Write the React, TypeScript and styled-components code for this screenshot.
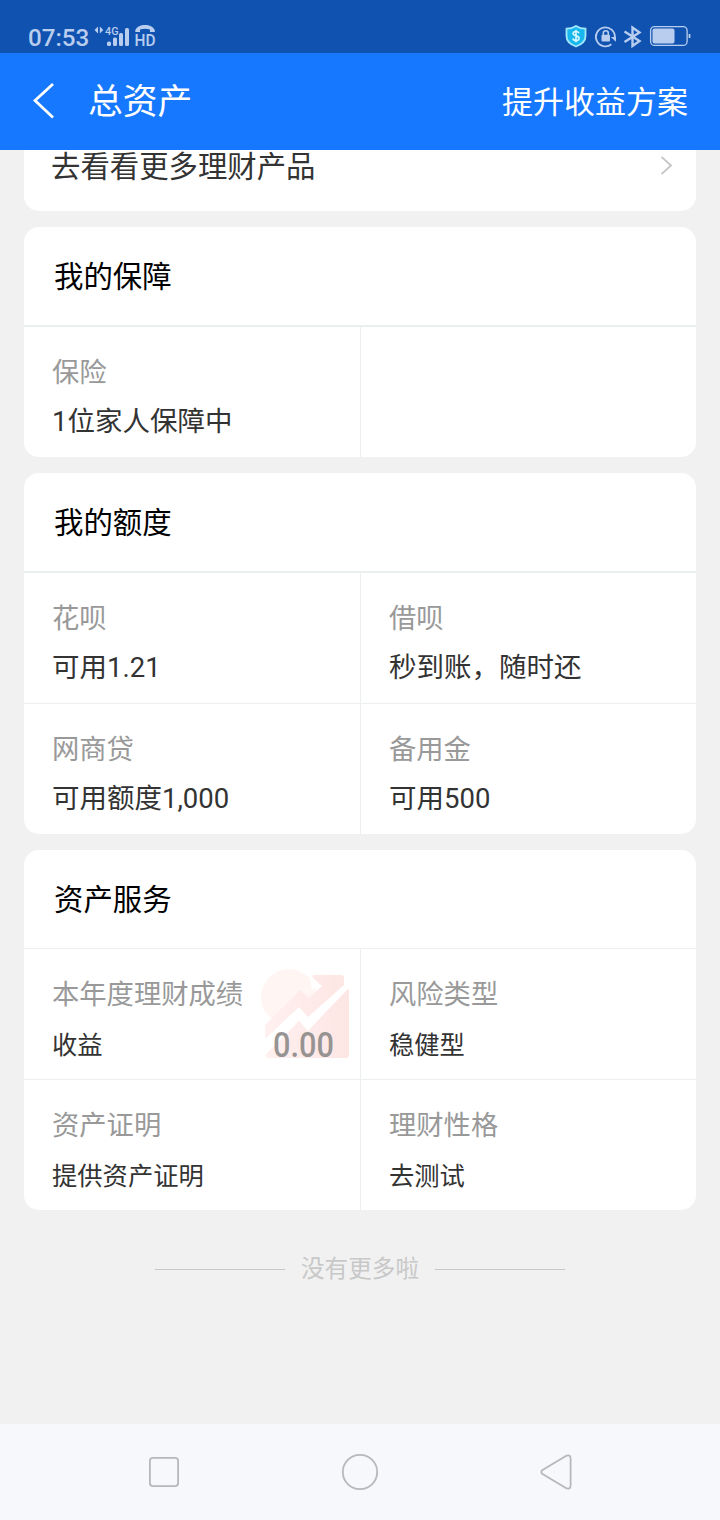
import React from "react";
import styled, { createGlobalStyle } from "styled-components";

const GlobalStyle = createGlobalStyle`
  *, *::before, *::after { box-sizing: border-box; }
  body {
    margin: 0;
    background: #f1f1f1;
    font-family: Roboto, "Noto Sans CJK SC", sans-serif;
  }
`;

const Screen = styled.div`
  display: flex;
  flex-direction: column;
  width: 720px;
  height: 1520px;
  overflow: hidden;
  background: #f1f1f1;
`;

const StatusBar = styled.div`
  display: flex;
  flex: none;
  justify-content: space-between;
  height: 53px;
  padding: 22px 29px 0 28px;
  background: #1052b0;
  color: #b9cdee;
`;

const StatusGroup = styled.div`
  display: flex;
  align-items: flex-start;
`;

const Clock = styled.span`
  width: 66px;
  font-size: 24.2px;
  font-weight: 500;
  line-height: 32px;
`;

const NavBar = styled.header`
  display: flex;
  flex: none;
  align-items: center;
  height: 97px;
  padding: 0 32px 2px 33px;
  background: #1677ff;
  color: #fff;
`;

const PageTitle = styled.h1`
  flex: 1;
  margin: 0 0 0 33px;
  padding-top: 3px;
  font-size: 34.8px;
  font-weight: 400;
  line-height: 48px;
`;

const PlanLink = styled.span`
  padding-top: 5px;
  font-size: 31px;
  line-height: 44px;
`;

const Content = styled.main`
  display: flex;
  flex: 1;
  flex-direction: column;
  gap: 16px;
  min-height: 0;
  padding: 0 24px;
`;

const Card = styled.section`
  flex: none;
  overflow: hidden;
  border-radius: 15px;
  background: #fff;
`;

const MoreCard = styled(Card)`
  display: flex;
  align-items: flex-start;
  justify-content: space-between;
  height: 61px;
  padding: 1px 23px 0 27px;
  border-top-left-radius: 0;
  border-top-right-radius: 0;
  color: #333;
  font-size: 29.4px;
  line-height: 32px;
  svg { margin-top: 4px; }
`;

const CardTitle = styled.h2`
  height: 98px;
  margin: 0;
  padding-left: 30px;
  color: #000;
  font-size: 29.4px;
  font-weight: 400;
  line-height: 100px;
`;

const Grid = styled.div<{ $rule: number }>`
  display: grid;
  grid-template-columns: 336px 335px;
  grid-auto-rows: 130px;
  gap: 1px;
  border-top: ${(p) => p.$rule}px solid #ebefef;
  background: #ebefef;
`;

const Cell = styled.div`
  position: relative;
  padding: 27px 0 0 28px;
  background: #fff;
`;

const Label = styled.div`
  position: relative;
  color: #999;
  font-size: 27.3px;
  line-height: 38px;
`;

const Value = styled.div<{ $compact?: boolean }>`
  margin-top: ${(p) => (p.$compact ? 13 : 11)}px;
  color: #333;
  font-size: ${(p) => (p.$compact ? 25.3 : 27.5)}px;
  line-height: 38px;
`;

const ChartMark = styled.svg`
  position: absolute;
  top: 18px;
  left: 237px;
`;

const Amount = styled.span`
  position: absolute;
  top: 76px;
  left: 249px;
  color: #979393;
  font-size: 34.5px;
  font-weight: 500;
  line-height: 40px;
  transform: scaleX(0.89);
  transform-origin: left;
`;

const EndNote = styled.div`
  display: flex;
  align-items: center;
  justify-content: center;
  gap: 16px;
  margin-top: 26px;
  color: #c8c8c8;
  font-size: 23.6px;
  line-height: 34px;
  &::before, &::after {
    content: "";
    width: 130px;
    height: 1px;
    margin-top: 1px;
    background: #c8c8c8;
  }
`;

const SystemNav = styled.nav`
  display: flex;
  flex: none;
  align-items: center;
  justify-content: space-between;
  height: 96px;
  padding: 0 144px;
  background: #f6f8fc;
`;

type Item = { label: string; value: string; amount?: string };
type Group = { title: string; rule: number; compact?: boolean; items: (Item | null)[] };

const groups: Group[] = [
  { title: "我的保障", rule: 2, items: [{ label: "保险", value: "1位家人保障中" }, null] },
  {
    title: "我的额度",
    rule: 2,
    items: [
      { label: "花呗", value: "可用1.21" },
      { label: "借呗", value: "秒到账，随时还" },
      { label: "网商贷", value: "可用额度1,000" },
      { label: "备用金", value: "可用500" },
    ],
  },
  {
    title: "资产服务",
    rule: 1,
    compact: true,
    items: [
      { label: "本年度理财成绩", value: "收益", amount: "0.00" },
      { label: "风险类型", value: "稳健型" },
      { label: "资产证明", value: "提供资产证明" },
      { label: "理财性格", value: "去测试" },
    ],
  },
];

const SignalIcons = () => (
  <svg width="64" height="30" viewBox="0 0 64 30" fill="currentColor" fontFamily="Roboto, sans-serif">
    <path d="M4 4.500v7L.5 8zM5.800 4.500v7L9.300 8z" />
    <text x="11" y="13" fontSize="11" fontWeight="500" textLength="13.500" lengthAdjust="spacingAndGlyphs">4G</text>
    <rect x="13" y="19.500" width="4" height="4.500" rx="1.500" />
    <rect x="19" y="15.500" width="4" height="8.500" rx="1.500" />
    <rect x="25" y="11" width="4" height="13" rx="1.500" />
    <rect x="31" y="6" width="4" height="18" rx="1.500" />
    <path d="M41.300 10V8.300c2.500-7 17-7 19.500 0V10h-4.800V7.500q-5-1.700-10 0V10z" />
    <text x="40.500" y="24.300" fontSize="16.500" fontWeight="500" textLength="21" lengthAdjust="spacingAndGlyphs">HD</text>
  </svg>
);

const DeviceIcons = () => (
  <svg width="127" height="30" viewBox="0 0 127 30" fill="none" stroke="#b9cdee">
    <path d="M12 4c3 2 6 2.700 9.500 2.700V14c0 5-4 8.500-9.500 10.500C6.500 22.500 2.500 19 2.500 14V6.700C6 6.700 9 6 12 4z" fill="#18b8ee" stroke="#a4e9fb" strokeWidth="1.800" />
    <path d="M15 11.200c-.5-1.200-1.500-1.700-3-1.700-1.800 0-2.900.8-2.900 2.100 0 3.100 6 1.400 6 4.600 0 1.400-1.200 2.300-3.100 2.300-1.700 0-2.800-.7-3.200-2M12 7.800v12.500" stroke="#d9f7ff" strokeWidth="1.600" />
    <path d="M47.400 22.200A9.500 9.500 0 1 1 50.900 15.200" strokeWidth="1.800" />
    <path d="M46.800 15l5.200 0v4.800z" fill="#b9cdee" stroke="none" />
    <rect x="37.500" y="12.800" width="8.500" height="6.700" rx="1" fill="#b9cdee" stroke="none" />
    <path d="M39.300 13v-1.700a2.500 2.500 0 0 1 5 0V13" strokeWidth="1.600" />
    <path d="M60.500 9.500l15 9.500-7 5V5.500l7 5-15 9.500" strokeWidth="2.400" />
    <rect x="86.600" y="4.600" width="36.500" height="18.800" rx="4" strokeWidth="1.300" />
    <rect x="88.500" y="6.500" width="22" height="15" rx="2" fill="#b9cdee" stroke="none" />
    <path d="M125.500 12v4" strokeWidth="1.800" />
  </svg>
);

export default function App() {
  return (
    <>
      <GlobalStyle />
      <Screen>
        <StatusBar>
          <StatusGroup>
            <Clock>07:53</Clock>
            <SignalIcons />
          </StatusGroup>
          <StatusGroup>
            <DeviceIcons />
          </StatusGroup>
        </StatusBar>
        <NavBar>
          <svg width="22" height="38" viewBox="0 0 22 38" fill="none" stroke="currentColor" strokeWidth="2.800">
            <path d="M20 2L2 18.500 20 35.500" />
          </svg>
          <PageTitle>总资产</PageTitle>
          <PlanLink>提升收益方案</PlanLink>
        </NavBar>
        <Content>
          <MoreCard>
            去看看更多理财产品
            <svg width="13" height="22" viewBox="0 0 13 22" fill="none" stroke="#c4c4c4" strokeWidth="1.800">
              <path d="M1.500 1.800L11 10.500 1.500 19.200" />
            </svg>
          </MoreCard>
          {groups.map((group) => (
            <Card key={group.title}>
              <CardTitle>{group.title}</CardTitle>
              <Grid $rule={group.rule}>
                {group.items.map((item, i) => (
                  <Cell key={i}>
                    {item?.amount && (
                      <ChartMark width="92" height="94" viewBox="0 0 92 94">
                        <defs>
                          <linearGradient id="rise" x1="0" y1="0" x2="1" y2="0">
                            <stop offset="0" stopColor="#fff0ef" />
                            <stop offset="1" stopColor="#fde6e4" />
                          </linearGradient>
                        </defs>
                        <circle cx="28" cy="30" r="28" fill="#fff6f4" />
                        <path d="M49 11l9-4v14l-7 2z" fill="#fff" />
                        <path d="M4 66v-8l35-35 9 8 13-12-9-8q-2-3 2-3h26q3 0 3 3v9L47 54 38 45 5 76z" fill="url(#rise)" />
                        <path d="M5 87L38 54l9 10 38-41q3-4 3 1v64q0 3-3 3H8q-4 0-3-4z" fill="url(#rise)" />
                        <path d="M4 72L38 40l9 10 36-32 5 1v2L47 63 38 53 4 86z" fill="#fff" />
                      </ChartMark>
                    )}
                    {item && (
                      <>
                        <Label>{item.label}</Label>
                        <Value $compact={group.compact}>{item.value}</Value>
                      </>
                    )}
                    {item?.amount && <Amount>{item.amount}</Amount>}
                  </Cell>
                ))}
              </Grid>
            </Card>
          ))}
          <EndNote>没有更多啦</EndNote>
        </Content>
        <SystemNav>
          <svg width="40" height="40" viewBox="0 0 40 40" fill="none" stroke="#b8b8ba" strokeWidth="1.800">
            <rect x="5.900" y="5.900" width="28.200" height="28.200" rx="3" />
          </svg>
          <svg width="40" height="40" viewBox="0 0 40 40" fill="none" stroke="#b8b8ba" strokeWidth="1.800">
            <circle cx="20" cy="20" r="17.200" />
          </svg>
          <svg width="40" height="40" viewBox="0 0 40 40" fill="none" stroke="#b8b8ba" strokeWidth="1.800" strokeLinejoin="round">
            <path d="M6.500 18L29.500 4.200Q34.600 2 34.600 6.500V33.500Q34.600 38 29.500 35.800L6.500 22Q4 20 6.500 18z" />
          </svg>
        </SystemNav>
      </Screen>
    </>
  );
}
